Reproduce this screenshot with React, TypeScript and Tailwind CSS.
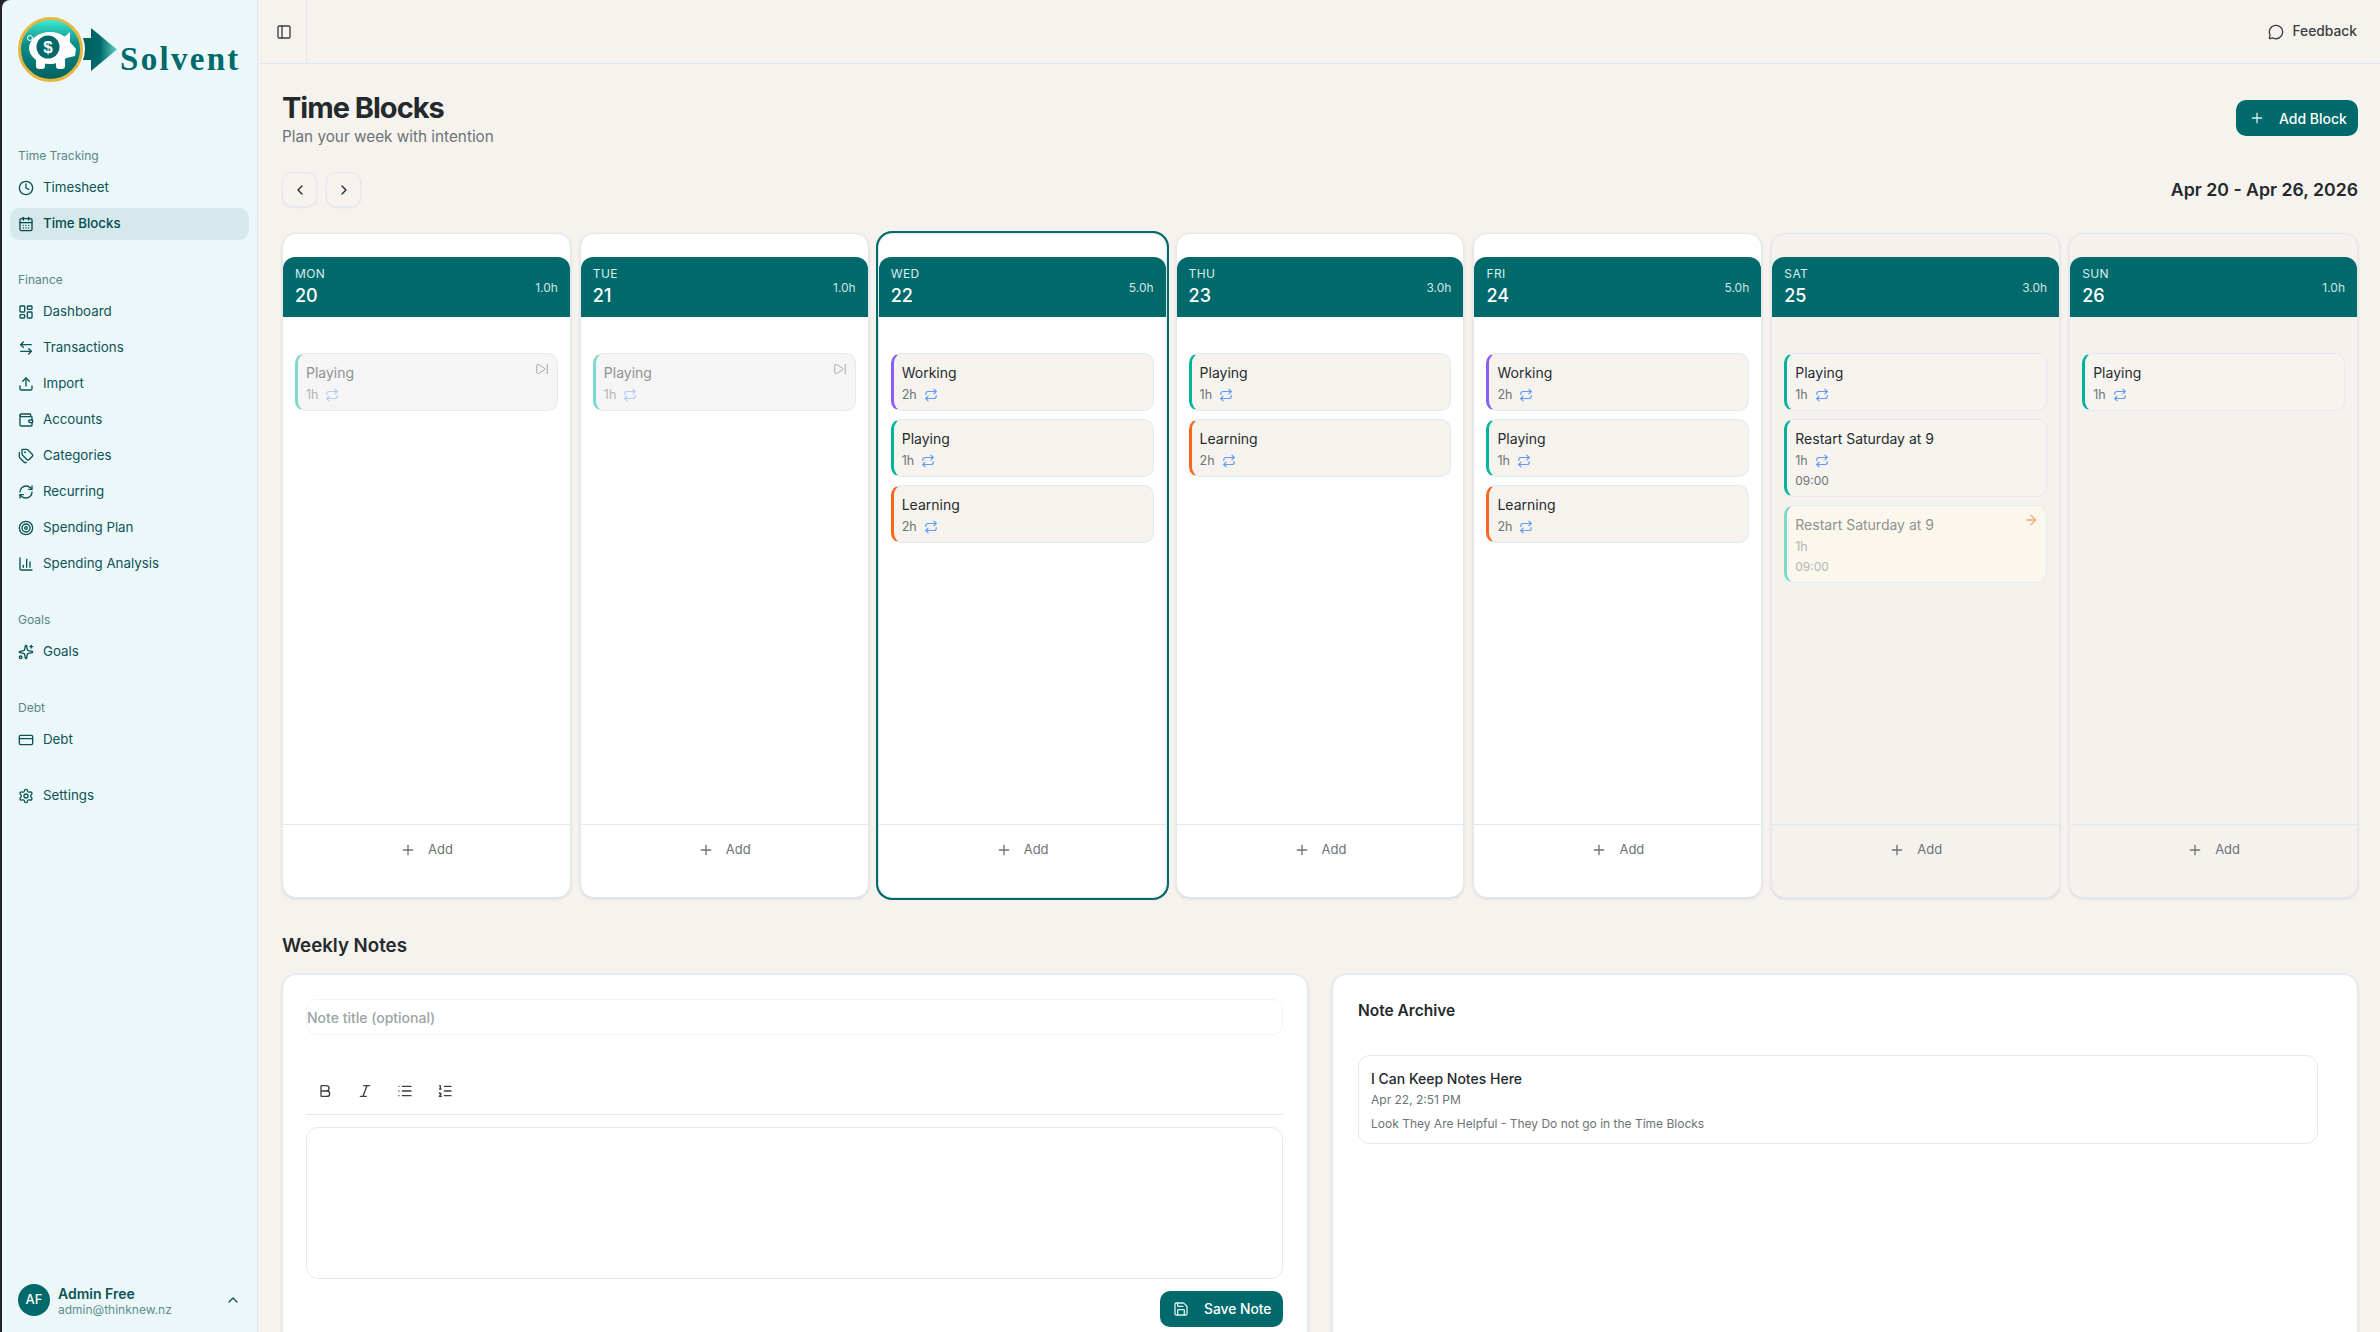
import React from 'react';
import {
  ArrowLeftRight, ArrowRight, Bold, CalendarDays, ChartColumn, ChevronLeft, ChevronRight, ChevronUp, Clock,
  CreditCard, Italic, LayoutDashboard, List, ListOrdered, MessageCircle, PanelLeft, Plus, RefreshCw, Repeat, Save,
  Settings, SkipForward, Sparkles, Tags, Target, Upload, Wallet,
} from 'lucide-react';

type Block = { title: string; hours: string; color: string; time?: string; state?: 'skipped' | 'moved' };
type Day = { name: string; date: number; total: string; blocks: Block[]; today?: boolean; weekend?: boolean };

const PURPLE = 'border-l-[#8b5cf6]';
const TEAL = 'border-l-[#00b39b]';
const ORANGE = 'border-l-[#f9671e]';

const playing: Block = { title: 'Playing', hours: '1h', color: TEAL };
const working: Block = { title: 'Working', hours: '2h', color: PURPLE };
const learning: Block = { title: 'Learning', hours: '2h', color: ORANGE };

const days: Day[] = [
  { name: 'MON', date: 20, total: '1.0h', blocks: [{ ...playing, state: 'skipped' }] },
  { name: 'TUE', date: 21, total: '1.0h', blocks: [{ ...playing, state: 'skipped' }] },
  { name: 'WED', date: 22, total: '5.0h', blocks: [working, playing, learning], today: true },
  { name: 'THU', date: 23, total: '3.0h', blocks: [playing, learning] },
  { name: 'FRI', date: 24, total: '5.0h', blocks: [working, playing, learning] },
  {
    name: 'SAT', date: 25, total: '3.0h', weekend: true,
    blocks: [
      playing,
      { title: 'Restart Saturday at 9', hours: '1h', color: TEAL, time: '09:00' },
      { title: 'Restart Saturday at 9', hours: '1h', color: TEAL, time: '09:00', state: 'moved' },
    ],
  },
  { name: 'SUN', date: 26, total: '1.0h', weekend: true, blocks: [playing] },
];

const navGroups = [
  { label: 'Time Tracking', items: [{ label: 'Timesheet', icon: Clock }, { label: 'Time Blocks', icon: CalendarDays, active: true }] },
  {
    label: 'Finance',
    items: [
      { label: 'Dashboard', icon: LayoutDashboard },
      { label: 'Transactions', icon: ArrowLeftRight },
      { label: 'Import', icon: Upload },
      { label: 'Accounts', icon: Wallet },
      { label: 'Categories', icon: Tags },
      { label: 'Recurring', icon: RefreshCw },
      { label: 'Spending Plan', icon: Target },
      { label: 'Spending Analysis', icon: ChartColumn },
    ],
  },
  { label: 'Goals', items: [{ label: 'Goals', icon: Sparkles }] },
  { label: 'Debt', items: [{ label: 'Debt', icon: CreditCard }] },
];

function Logo() {
  return (
    <div className="flex h-[100px] items-start">
      <svg width="118" height="100" viewBox="0 0 118 100" className="shrink-0">
        <defs>
          <linearGradient id="coin" x1="0" y1="0" x2="0" y2="1">
            <stop offset="0" stopColor="#3ff0d6" />
            <stop offset="0.4" stopColor="#0d8f8a" />
            <stop offset="1" stopColor="#005f5c" />
          </linearGradient>
          <linearGradient id="arrow" x1="0" y1="0" x2="1" y2="0">
            <stop offset="0" stopColor="#005f5c" />
            <stop offset="0.5" stopColor="#00696b" />
            <stop offset="1" stopColor="#5fd0c0" />
          </linearGradient>
        </defs>
        <path d="M81 38 H89 V28 L115 49.5 L89 71 V60 H81 Q85 49 81 38 Z" fill="url(#arrow)" />
        <circle cx="48.5" cy="49.5" r="31" fill="url(#coin)" stroke="#e6b740" strokeWidth="3" />
        <g fill="#fff">
          <ellipse cx="48" cy="48" rx="21" ry="16" />
          <path d="M60 39 L68 32 L68 42 L74 49 L73 56 L64 58 Z" />
          <rect x="34" y="58" width="9" height="11" rx="3" />
          <rect x="54" y="58" width="9" height="11" rx="3" />
          <circle cx="28" cy="38" r="2.5" fill="none" stroke="#fff" strokeWidth="1" />
        </g>
        <circle cx="46" cy="47" r="11.5" fill="#00696b" />
        <text x="46" y="53" textAnchor="middle" fontSize="17" fontWeight="700" fill="#fff" fontFamily="Liberation Sans, sans-serif">$</text>
      </svg>
      <span className="mt-[39px] font-['Liberation_Serif',serif] text-[33px] font-bold leading-[40px] tracking-[2.3px] text-[#00696b]">Solvent</span>
    </div>
  );
}

function Sidebar() {
  return (
    <aside className="ml-[2px] flex h-full w-[256px] shrink-0 flex-col overflow-hidden rounded-tl-[8px] border-r border-[#dfe7ea] bg-[#ebf7f8] text-[#0b5457]">
      <Logo />
      <nav className="mt-[40px] flex flex-col">
        {navGroups.map((g) => (
          <div key={g.label} className="mb-[24px] flex flex-col gap-[4px] px-[8px]">
            <div className="flex h-[28px] items-center px-[8px] pt-[3px] text-[12px] text-[#568688]">{g.label}</div>
            {g.items.map((item) => (
              <NavItem key={item.label} {...item} />
            ))}
          </div>
        ))}
        <div className="px-[8px]">
          <NavItem label="Settings" icon={Settings} />
        </div>
      </nav>
      <div className="mt-auto flex h-[64px] items-center pl-[16px] pr-[16px]">
        <div className="flex h-[32px] w-[32px] items-center justify-center rounded-full bg-[#00696b] text-[13px] font-medium text-white">AF</div>
        <div className="ml-[8px] mt-[1px] flex flex-col">
          <span className="text-[14px] font-semibold leading-[17px] text-[#0b5457]">Admin Free</span>
          <span className="text-[12px] leading-[15px] text-[#5d8f90]">admin@thinknew.nz</span>
        </div>
        <ChevronUp size={16} strokeWidth={2} className="ml-auto text-[#0b5457]" />
      </div>
    </aside>
  );
}

function NavItem({ label, icon: Icon, active }: { label: string; icon: React.ElementType; active?: boolean }) {
  return (
    <div className={`flex h-[32px] items-center gap-[9px] rounded-[10px] px-[8px] text-[13.3px] ${active ? 'bg-[#d5e9ec] font-medium text-[#07494c]' : 'text-[#0b5457]'}`}>
      <Icon size={16} strokeWidth={2} />
      <span>{label}</span>
    </div>
  );
}

function BlockCard({ block, weekend }: { block: Block; weekend?: boolean }) {
  const skipped = block.state === 'skipped';
  const moved = block.state === 'moved';
  const bg = skipped ? 'bg-[#f5f5f5]' : moved ? 'bg-[#fbf7ed]' : weekend ? 'bg-[#f7f4f0]' : 'bg-[#f6f3ee]';
  const faded = skipped || moved;
  return (
    <div className={`relative rounded-[10px] border border-[#e3e9ef] border-l-[3px] ${faded ? 'border-l-[#7fd9cb]' : block.color} ${bg} pb-[7px] pl-[8px] pr-[8px] pt-[9px]`}>
      <div className={`text-[14px] leading-[20px] ${faded ? 'text-[#8f9291]' : 'text-[#272c2e]'}`}>{block.title}</div>
      <div className={`mt-[4px] flex h-[16px] items-center gap-[7px] text-[12.5px] ${faded ? 'text-[#b3b5b4]' : 'text-[#6c7375]'}`}>
        <span>{block.hours}</span>
        {!moved && <Repeat size={14} strokeWidth={2} className={skipped ? 'text-[#b3ccf7]' : 'text-[#5f9bf8]'} />}
      </div>
      {block.time && <div className={`mt-[4px] text-[12px] leading-[16px] ${moved ? 'text-[#b3b5b4]' : 'text-[#6c7375]'}`}>{block.time}</div>}
      {skipped && <SkipForward size={14} strokeWidth={1.6} className="absolute right-[8px] top-[8px] text-[#a0a3a3]" />}
      {moved && <ArrowRight size={16} strokeWidth={2} className="absolute right-[7px] top-[6px] text-[#eeab73]" />}
    </div>
  );
}

function DayColumn({ day }: { day: Day }) {
  return (
    <div className={`flex h-[665px] flex-col rounded-[14px] border border-[#e2e8f0] py-[23px] shadow-[0_1px_3px_rgba(40,60,80,0.14)] ${day.weekend ? 'bg-[#f5f1ed]' : 'bg-white'} ${day.today ? 'ring-2 ring-[#00696b]' : ''}`}>
      <div className="flex h-[60px] shrink-0 items-center justify-between rounded-t-[12px] bg-[#00696b] pl-[12px] pr-[12px] text-white">
        <div className="flex flex-col pt-[1px]">
          <span className="text-[12px] leading-[16px] tracking-[0.4px] text-[#d9eeee]">{day.name}</span>
          <span className="mt-[1px] text-[18px] font-medium leading-[26px]">{day.date}</span>
        </div>
        <span className="mb-[-2px] text-[12px] text-[#cfe6e6]">{day.total}</span>
      </div>
      <div className="flex flex-1 flex-col gap-[8px] px-[12px] pt-[36px]">
        {day.blocks.map((b, i) => (
          <BlockCard key={i} block={b} weekend={day.weekend} />
        ))}
      </div>
      <div className="flex h-[50px] shrink-0 items-center justify-center gap-[12px] border-t border-[#e2e8f0] text-[13px] text-[#6c7375]">
        <Plus size={16} strokeWidth={2} />
        <span>Add</span>
      </div>
    </div>
  );
}

export default function App() {
  return (
    <div className="flex h-[1332px] w-[2380px] overflow-hidden bg-[#20262c] font-['Inter',sans-serif]">
      <Sidebar />
      <main className="flex h-full min-w-0 flex-1 flex-col overflow-hidden bg-[#f6f3ee] text-[#24292c]">
        <header className="flex h-[64px] shrink-0 items-center border-b border-[#e0e7ea]">
          <div className="flex h-full w-[49px] items-center justify-center border-r border-[#e6e8e8]">
            <PanelLeft size={16} strokeWidth={2} className="ml-[4px] text-[#3a3f40]" />
          </div>
          <button className="ml-auto mr-[23px] flex items-center gap-[8px] text-[13.8px] font-medium text-[#3a3f40]">
            <MessageCircle size={16} strokeWidth={2} />
            Feedback
          </button>
        </header>

        <div className="flex flex-col pl-[24px] pr-[22px] pt-[24px]">
          <div className="flex items-start justify-between">
            <div className="pt-[1px]">
              <h1 className="text-[29px] font-bold leading-[38px] tracking-[-1px]">Time Blocks</h1>
              <p className="text-[15.3px] leading-[20px] text-[#6c7375]">Plan your week with intention</p>
            </div>
            <button className="mt-[12px] flex h-[36px] w-[122px] items-center gap-[14px] rounded-[10px] bg-[#00696b] pl-[13px] text-[14px] font-medium text-white">
              <Plus size={16} strokeWidth={2} className="text-[#d9eeee]" />
              Add Block
            </button>
          </div>

          <div className="mt-[25px] flex items-center gap-[9px]">
            <button className="flex h-[35px] w-[35px] items-center justify-center rounded-[10px] border border-[#e2e8f0] bg-[#f6f3ee] shadow-[0_1px_2px_rgba(40,60,80,0.08)]">
              <ChevronLeft size={16} strokeWidth={2} />
            </button>
            <button className="flex h-[35px] w-[35px] items-center justify-center rounded-[10px] border border-[#e2e8f0] bg-[#f6f3ee] shadow-[0_1px_2px_rgba(40,60,80,0.08)]">
              <ChevronRight size={16} strokeWidth={2} />
            </button>
            <span className="ml-auto pt-[1px] text-[17.7px] font-semibold">Apr 20 - Apr 26, 2026</span>
          </div>

          <div className="mt-[26px] grid grid-cols-7 gap-[9px]">
            {days.map((d) => (
              <DayColumn key={d.name} day={d} />
            ))}
          </div>

          <h2 className="mb-[14px] mt-[34px] text-[18.7px] font-semibold leading-[28px]">Weekly Notes</h2>

          <div className="grid grid-cols-2 gap-[24px]">
            <section className="flex h-[420px] flex-col rounded-[14px] border border-[#e2e8f0] bg-white pl-[23px] pr-[24px] pt-[24px] shadow-[0_1px_3px_rgba(40,60,80,0.14)]">
              <div className="flex h-[36px] shrink-0 items-center rounded-[10px] border border-[#f3f4f6] text-[14px] font-medium text-[#9aa5a5]">Note title (optional)</div>
              <div className="mt-[36px] flex h-[44px] items-start gap-[20px] border-b border-[#e2e8f0] px-[9px] pt-[12px] text-[#3a3f40]">
                <Bold size={16} strokeWidth={2} className="mx-[2px]" />
                <Italic size={16} strokeWidth={2} className="mx-[2px]" />
                <List size={16} strokeWidth={2} className="mx-[2px]" />
                <ListOrdered size={16} strokeWidth={2} className="mx-[2px]" />
              </div>
              <div className="mt-[12px] h-[152px] shrink-0 rounded-[12px] border border-[#e2e8f0]" />
              <button className="ml-auto mt-[12px] flex h-[36px] w-[123px] shrink-0 items-center gap-[15px] rounded-[10px] bg-[#00696b] pl-[13px] text-[13.8px] font-medium text-white">
                <Save size={16} strokeWidth={2} className="text-[#d9eeee]" />
                Save Note
              </button>
            </section>

            <section className="h-[420px] rounded-[14px] border border-[#e2e8f0] bg-white pl-[25px] pr-[39px] pt-[24px] shadow-[0_1px_3px_rgba(40,60,80,0.14)]">
              <h3 className="text-[15.5px] font-semibold leading-[24px]">Note Archive</h3>
              <div className="mt-[32px] flex h-[89px] flex-col rounded-[12px] border border-[#e2e8f0] px-[12px] pt-[13px]">
                <div className="text-[14px] font-medium leading-[20px]">I Can Keep Notes Here</div>
                <div className="mt-[3px] text-[12px] leading-[16px] text-[#6c7375]">Apr 22, 2:51 PM</div>
                <div className="mt-[8px] text-[12px] leading-[16px] text-[#6c7375]">Look They Are Helpful - They Do not go in the Time Blocks</div>
              </div>
            </section>
          </div>
        </div>
      </main>
    </div>
  );
}
